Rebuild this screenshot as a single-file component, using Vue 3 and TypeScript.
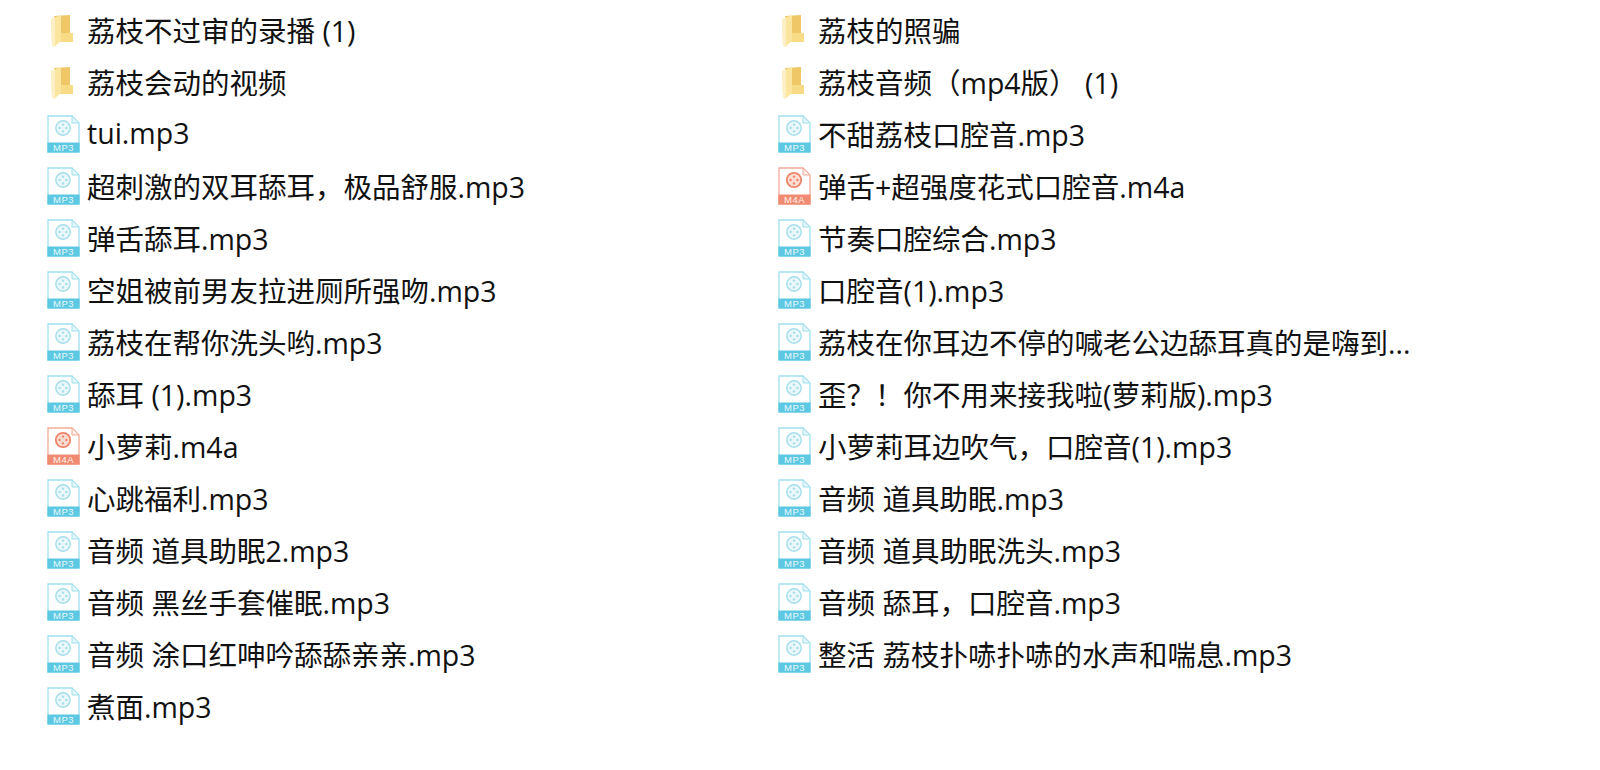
<script setup lang="ts">
type Kind = 'folder' | 'mp3' | 'm4a'
interface FileItem { name: string; kind: Kind }

const kindOf = (name: string): Kind => {
  if (name.endsWith('.m4a')) return 'm4a'
  if (name.endsWith('.mp3') || name.endsWith('...')) return 'mp3'
  return 'folder'
}
const toItems = (names: string[]): FileItem[] => names.map((name) => ({ name, kind: kindOf(name) }))

const holes = [
  [17, 9.6],
  [20.4, 13],
  [17, 16.4],
  [13.6, 13],
]

const columns: FileItem[][] = [
  toItems([
    '荔枝不过审的录播 (1)',
    '荔枝会动的视频',
    'tui.mp3',
    '超刺激的双耳舔耳，极品舒服.mp3',
    '弹舌舔耳.mp3',
    '空姐被前男友拉进厕所强吻.mp3',
    '荔枝在帮你洗头哟.mp3',
    '舔耳 (1).mp3',
    '小萝莉.m4a',
    '心跳福利.mp3',
    '音频 道具助眠2.mp3',
    '音频 黑丝手套催眠.mp3',
    '音频 涂口红呻吟舔舔亲亲.mp3',
    '煮面.mp3',
  ]),
  toItems([
    '荔枝的照骗',
    '荔枝音频（mp4版） (1)',
    '不甜荔枝口腔音.mp3',
    '弹舌+超强度花式口腔音.m4a',
    '节奏口腔综合.mp3',
    '口腔音(1).mp3',
    '荔枝在你耳边不停的喊老公边舔耳真的是嗨到...',
    '歪？！你不用来接我啦(萝莉版).mp3',
    '小萝莉耳边吹气，口腔音(1).mp3',
    '音频 道具助眠.mp3',
    '音频 道具助眠洗头.mp3',
    '音频 舔耳，口腔音.mp3',
    '整活 荔枝扑哧扑哧的水声和喘息.mp3',
  ]),
]
</script>

<template>
  <div class="page">
    <ul v-for="(col, i) in columns" :key="i" class="col">
      <li v-for="item in col" :key="item.name" class="row">
        <svg v-if="item.kind === 'folder'" class="icon" viewBox="0 0 35 38">
          <path d="M8 5 L24 4 L24 24 L27 24 L27 31 L8 31 Z" fill="#efc766" />
          <path d="M13 22 L27 22 L27 31 L13 31 Z" fill="#f8db85" />
          <path d="M5 8 L15 4 L15 30 L8 36 L6 34 Z" fill="#fbe59f" />
          <path d="M5 8 L9 6.4 L9 35 L8 36 L6 34 Z" fill="#fdf0c6" />
        </svg>
        <svg v-else class="icon" viewBox="0 0 35 38" :class="item.kind">
          <path class="sheet" d="M2 1 H26 L33 8 V37 H2 Z" />
          <path class="fold" d="M26 1 V8 H33 Z" />
          <circle class="disc" cx="17" cy="13" r="7.2" />
          <circle v-for="(h, n) in holes" :key="n" class="dot" :cx="h[0]" :cy="h[1]" r="1.2" />
          <rect class="band" x="1.4" y="27.5" width="32.2" height="10" />
          <text class="tag" x="17.5" y="36" text-anchor="middle">{{ item.kind.toUpperCase() }}</text>
        </svg>
        <span class="name">{{ item.name }}</span>
      </li>
    </ul>
  </div>
</template>

<style>
body {
  background: #fff;
}
</style>

<style scoped>
.page {
  display: grid;
  grid-template-columns: 731px 731px;
  padding: 3px 0 0 46px;
  height: 767px;
  overflow: hidden;
  font-family: "Open Sans", "Noto Sans CJK SC", sans-serif;
  color: #111;
}

.col {
  list-style: none;
  margin: 0;
  padding: 0;
}

.row {
  display: flex;
  align-items: center;
  gap: 6px;
  height: 52px;
}

.icon {
  flex-shrink: 0;
  width: 35px;
  height: 38px;
  margin-top: 2px;
}

.name {
  font-size: 28.5px;
  white-space: nowrap;
}

.sheet {
  fill: #fff;
  stroke: #9fe0ee;
  stroke-width: 1.3;
}

.fold {
  fill: #e4f6fb;
  stroke: #9fe0ee;
  stroke-width: 1;
}

.disc {
  fill: #eaf8fb;
  stroke: #a5deeb;
  stroke-width: 1.5;
}

.dot {
  fill: #a5deeb;
}

.band {
  fill: #5cc8e2;
}

.tag {
  fill: #e9f9fd;
  font-size: 9.5px;
  font-family: "Liberation Sans", sans-serif;
  letter-spacing: 0.5px;
}

.m4a .sheet,
.m4a .fold {
  stroke: #f3ab98;
}

.m4a .fold {
  fill: #fdeee9;
}

.m4a .disc {
  fill: #fbdcd2;
  stroke: #ee8469;
  stroke-width: 1.8;
}

.m4a .dot {
  fill: #ee8469;
}

.m4a .band {
  fill: #f08a70;
}

.m4a .tag {
  fill: #fff1ec;
}
</style>
